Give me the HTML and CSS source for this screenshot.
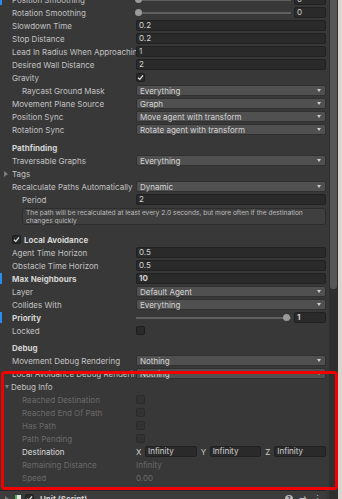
FILE: index.html
```html
<!DOCTYPE html>
<html>

<head>
    <title>Inspector - Unit</title>
    <link rel="stylesheet" href="styles.css">
</head>

<body>
    <div class="window">
        <div class="inspector">
            <div class="rows">
                <div class="row override">
                    <div class="label">Position Smoothing</div>
                    <div class="value">
                        <div class="track"><span class="thumb"></span></div>
                        <div class="field num">0</div>
                    </div>
                </div>
                <div class="row">
                    <div class="label">Rotation Smoothing</div>
                    <div class="value">
                        <div class="track"><span class="thumb"></span></div>
                        <div class="field num">0</div>
                    </div>
                </div>
                <div class="row">
                    <div class="label">Slowdown Time</div>
                    <div class="value"><div class="field">0.2</div></div>
                </div>
                <div class="row">
                    <div class="label">Stop Distance</div>
                    <div class="value"><div class="field">0.2</div></div>
                </div>
                <div class="row">
                    <div class="label">Lead In Radius When Approaching Target</div>
                    <div class="value"><div class="field">1</div></div>
                </div>
                <div class="row">
                    <div class="label">Desired Wall Distance</div>
                    <div class="value"><div class="field">2</div></div>
                </div>
                <div class="row">
                    <div class="label">Gravity</div>
                    <div class="value">
                        <span class="check">
                            <svg width="7" height="7" viewBox="0 0 7 7"><path d="M1 3.7 L2.8 5.4 L6 1.4" fill="none" stroke="#e2e2e2" stroke-width="1.3"/></svg>
                        </span>
                    </div>
                </div>
                <div class="row">
                    <div class="label indent">Raycast Ground Mask</div>
                    <div class="value"><div class="dropdown">Everything</div></div>
                </div>
                <div class="row">
                    <div class="label">Movement Plane Source</div>
                    <div class="value"><div class="dropdown">Graph</div></div>
                </div>
                <div class="row">
                    <div class="label">Position Sync</div>
                    <div class="value"><div class="dropdown">Move agent with transform</div></div>
                </div>
                <div class="row">
                    <div class="label">Rotation Sync</div>
                    <div class="value"><div class="dropdown">Rotate agent with transform</div></div>
                </div>

                <div class="row header">
                    <div class="label">Pathfinding</div>
                </div>
                <div class="row">
                    <div class="label">Traversable Graphs</div>
                    <div class="value"><div class="dropdown">Everything</div></div>
                </div>
                <div class="row">
                    <div class="label foldout"><span class="arrow-right"></span>Tags</div>
                </div>
                <div class="row">
                    <div class="label">Recalculate Paths Automatically</div>
                    <div class="value"><div class="dropdown">Dynamic</div></div>
                </div>
                <div class="row">
                    <div class="label indent">Period</div>
                    <div class="value"><div class="field">2</div></div>
                </div>
                <div class="help">
                    The path will be recalculated at least every 2.0 seconds, but more often if the destination
                    changes quickly
                </div>

                <div class="row header avoidance">
                    <div class="label toggle">
                        <span class="check">
                            <svg width="7" height="7" viewBox="0 0 7 7"><path d="M1 3.7 L2.8 5.4 L6 1.4" fill="none" stroke="#e2e2e2" stroke-width="1.3"/></svg>
                        </span>
                        Local Avoidance
                    </div>
                </div>
                <div class="row">
                    <div class="label">Agent Time Horizon</div>
                    <div class="value"><div class="field">0.5</div></div>
                </div>
                <div class="row">
                    <div class="label">Obstacle Time Horizon</div>
                    <div class="value"><div class="field">0.5</div></div>
                </div>
                <div class="row override bold">
                    <div class="label">Max Neighbours</div>
                    <div class="value"><div class="field">10</div></div>
                </div>
                <div class="row">
                    <div class="label">Layer</div>
                    <div class="value"><div class="dropdown">Default Agent</div></div>
                </div>
                <div class="row">
                    <div class="label">Collides With</div>
                    <div class="value"><div class="dropdown">Everything</div></div>
                </div>
                <div class="row override bold">
                    <div class="label">Priority</div>
                    <div class="value">
                        <div class="track max"><span class="thumb"></span></div>
                        <div class="field num">1</div>
                    </div>
                </div>
                <div class="row">
                    <div class="label">Locked</div>
                    <div class="value"><span class="check"></span></div>
                </div>

                <div class="row header debug">
                    <div class="label">Debug</div>
                </div>
                <div class="row">
                    <div class="label">Movement Debug Rendering</div>
                    <div class="value"><div class="dropdown">Nothing</div></div>
                </div>
                <div class="row">
                    <div class="label">Local Avoidance Debug Rendering</div>
                    <div class="value"><div class="dropdown">Nothing</div></div>
                </div>
                <div class="row">
                    <div class="label foldout open"><span class="arrow-down"></span>Debug Info</div>
                </div>
                <div class="row disabled">
                    <div class="label indent">Reached Destination</div>
                    <div class="value"><span class="check"></span></div>
                </div>
                <div class="row disabled">
                    <div class="label indent">Reached End Of Path</div>
                    <div class="value"><span class="check"></span></div>
                </div>
                <div class="row disabled">
                    <div class="label indent">Has Path</div>
                    <div class="value"><span class="check"></span></div>
                </div>
                <div class="row disabled">
                    <div class="label indent">Path Pending</div>
                    <div class="value"><span class="check"></span></div>
                </div>
                <div class="row bright">
                    <div class="label indent">Destination</div>
                    <div class="value vector">
                        <div class="axis"><span class="letter">X</span><div class="field">Infinity</div></div>
                        <div class="axis"><span class="letter">Y</span><div class="field">Infinity</div></div>
                        <div class="axis"><span class="letter">Z</span><div class="field">Infinity</div></div>
                    </div>
                </div>
                <div class="row disabled">
                    <div class="label indent">Remaining Distance</div>
                    <div class="value">Infinity</div>
                </div>
                <div class="row disabled">
                    <div class="label indent">Speed</div>
                    <div class="value">0.00</div>
                </div>

                <div class="component">
                    <span class="arrow-right"></span>
                    <span class="script-icon"></span>
                    <span class="check">
                        <svg width="7" height="7" viewBox="0 0 7 7"><path d="M1 3.7 L2.8 5.4 L6 1.4" fill="none" stroke="#e2e2e2" stroke-width="1.3"/></svg>
                    </span>
                    <span class="component-name">Unit (Script)</span>
                    <span class="component-tools">
                        <span class="help-icon">?</span>
                        <span class="tool">⇄</span>
                        <span class="tool">⋮</span>
                    </span>
                </div>
            </div>
        </div>
        <div class="scrollbar"><div class="scroll-thumb"></div></div>
        <div class="edge"></div>

        <div class="highlight"></div>
    </div>
</body>

</html>
```

FILE: styles.css
```css
body {
    margin: 0;
    background-color: #d9d6cf;
    font-family: Inter, "Noto Sans", sans-serif;
    font-size: 8px;
    color: #c2c2c2;
}

.window {
    position: relative;
    display: flex;
    width: 342px;
    height: 499px;
    overflow: hidden;
}

.inspector {
    width: 329px;
    background-color: #383838;
    overflow: hidden;
}

.rows {
    margin-top: -7px;
    padding-right: 3px;
}

.scrollbar {
    width: 9px;
    background-color: #2f2f2f;
}

.scroll-thumb {
    margin-left: 1px;
    width: 7px;
    height: 289px;
    background-color: #565656;
    border-radius: 0 0 3px 3px;
}

.edge {
    width: 4px;
    background-color: #d9d6cf;
}

/* rows */

.row {
    position: relative;
    display: flex;
    align-items: center;
    height: 13px;
}

.row.override::before {
    content: "";
    position: absolute;
    left: 0;
    top: 1px;
    bottom: 1px;
    width: 2px;
    background-color: #2b8cf0;
}

.label {
    flex: none;
    box-sizing: border-box;
    width: 136px;
    padding-left: 12px;
    padding-right: 2px;
    white-space: nowrap;
    overflow: hidden;
}

.label.indent {
    padding-left: 22px;
}

.value {
    flex: 1;
    display: flex;
    align-items: center;
    min-width: 0;
    white-space: nowrap;
}

.field {
    flex: 1;
    box-sizing: border-box;
    height: 11px;
    padding-left: 2px;
    line-height: 9px;
    background-color: #2a2a2a;
    border: 1px solid #212121;
    border-radius: 2px;
    color: #d4d4d4;
}

.field.num {
    flex: none;
    width: 32px;
    margin-left: 3px;
}

.dropdown {
    flex: 1;
    display: flex;
    align-items: center;
    justify-content: space-between;
    box-sizing: border-box;
    height: 11px;
    padding: 0 4px 0 3px;
    background-color: #505050;
    border: 1px solid #303030;
    border-radius: 2px;
    color: #d4d4d4;
}

.dropdown::after {
    content: "";
    border-left: 2.5px solid transparent;
    border-right: 2.5px solid transparent;
    border-top: 3px solid #cfcfcf;
}

.track {
    flex: 1;
    display: flex;
    align-items: center;
    height: 11px;
    background: linear-gradient(#5f5f5f, #5f5f5f) center / 100% 2px no-repeat;
}

.track.max {
    justify-content: flex-end;
}

.thumb {
    width: 7px;
    height: 7px;
    margin-left: -1px;
    border-radius: 50%;
    background-color: #9a9a9a;
}

.track.max .thumb {
    margin-left: 0;
    margin-right: 1px;
}

.check {
    display: flex;
    align-items: center;
    justify-content: center;
    flex: none;
    box-sizing: border-box;
    width: 9px;
    height: 9px;
    background-color: #2a2a2a;
    border: 1px solid #1e1e1e;
    border-radius: 2px;
}

.row.header {
    margin-top: 5px;
    font-weight: bold;
    color: #d4d4d4;
}

.row.avoidance {
    margin-top: 8px;
}

.row.debug {
    margin-top: 4px;
}

.row.bold {
    font-weight: bold;
    color: #d4d4d4;
}

.row.disabled {
    color: #6a6a6a;
}

.row.disabled .check {
    background-color: #323232;
    border-color: #2b2b2b;
}

.row.bright .label {
    color: #dadada;
}

.label.toggle {
    display: flex;
    align-items: center;
    gap: 3px;
}

.label.foldout {
    display: flex;
    align-items: center;
    gap: 4px;
    padding-left: 4px;
}

.label.foldout.open {
    gap: 2px;
    padding-left: 5px;
}

.arrow-right {
    width: 0;
    height: 0;
    border-top: 3px solid transparent;
    border-bottom: 3px solid transparent;
    border-left: 4px solid #7c7c7c;
}

.arrow-down {
    width: 0;
    height: 0;
    border-left: 2.5px solid transparent;
    border-right: 2.5px solid transparent;
    border-top: 4px solid #7c7c7c;
}

.help {
    box-sizing: border-box;
    height: 17px;
    margin: 2px 0 0 22px;
    padding: 1px 3px;
    background-color: #3f3f3f;
    border: 1px solid #2d2d2d;
    border-radius: 3px;
    font-size: 6.6px;
    line-height: 7.5px;
    color: #bdbdbd;
}

.vector {
    gap: 4px;
}

.axis {
    flex: 1;
    display: flex;
    align-items: center;
    min-width: 0;
}

.letter {
    width: 9px;
    color: #cfcfcf;
}

/* component header below */

.component {
    display: flex;
    align-items: center;
    gap: 4px;
    height: 15px;
    margin-top: 6px;
    padding-left: 5px;
    padding-right: 4px;
    background-color: #3c3c3c;
    border-top: 1px solid #262626;
    font-weight: bold;
    color: #d4d4d4;
}

.script-icon {
    width: 6px;
    height: 8px;
    margin-left: 2px;
    background-color: #e4e4e4;
    border-left: 2px solid #4caf50;
    box-sizing: border-box;
}

.component-name {
    flex: 1;
    margin-left: 2px;
}

.component-tools {
    display: flex;
    align-items: center;
    gap: 6px;
    font-weight: normal;
    color: #bdbdbd;
}

.help-icon {
    width: 8px;
    height: 8px;
    border-radius: 50%;
    background-color: #bdbdbd;
    color: #3c3c3c;
    font-size: 6px;
    line-height: 8px;
    text-align: center;
    font-weight: bold;
}

.tool {
    font-size: 9px;
}

/* screenshot annotation */

.highlight {
    position: absolute;
    left: 1px;
    top: 371px;
    width: 337px;
    height: 119px;
    box-sizing: border-box;
    border: 3px solid #f20000;
    border-radius: 4px;
}
```
